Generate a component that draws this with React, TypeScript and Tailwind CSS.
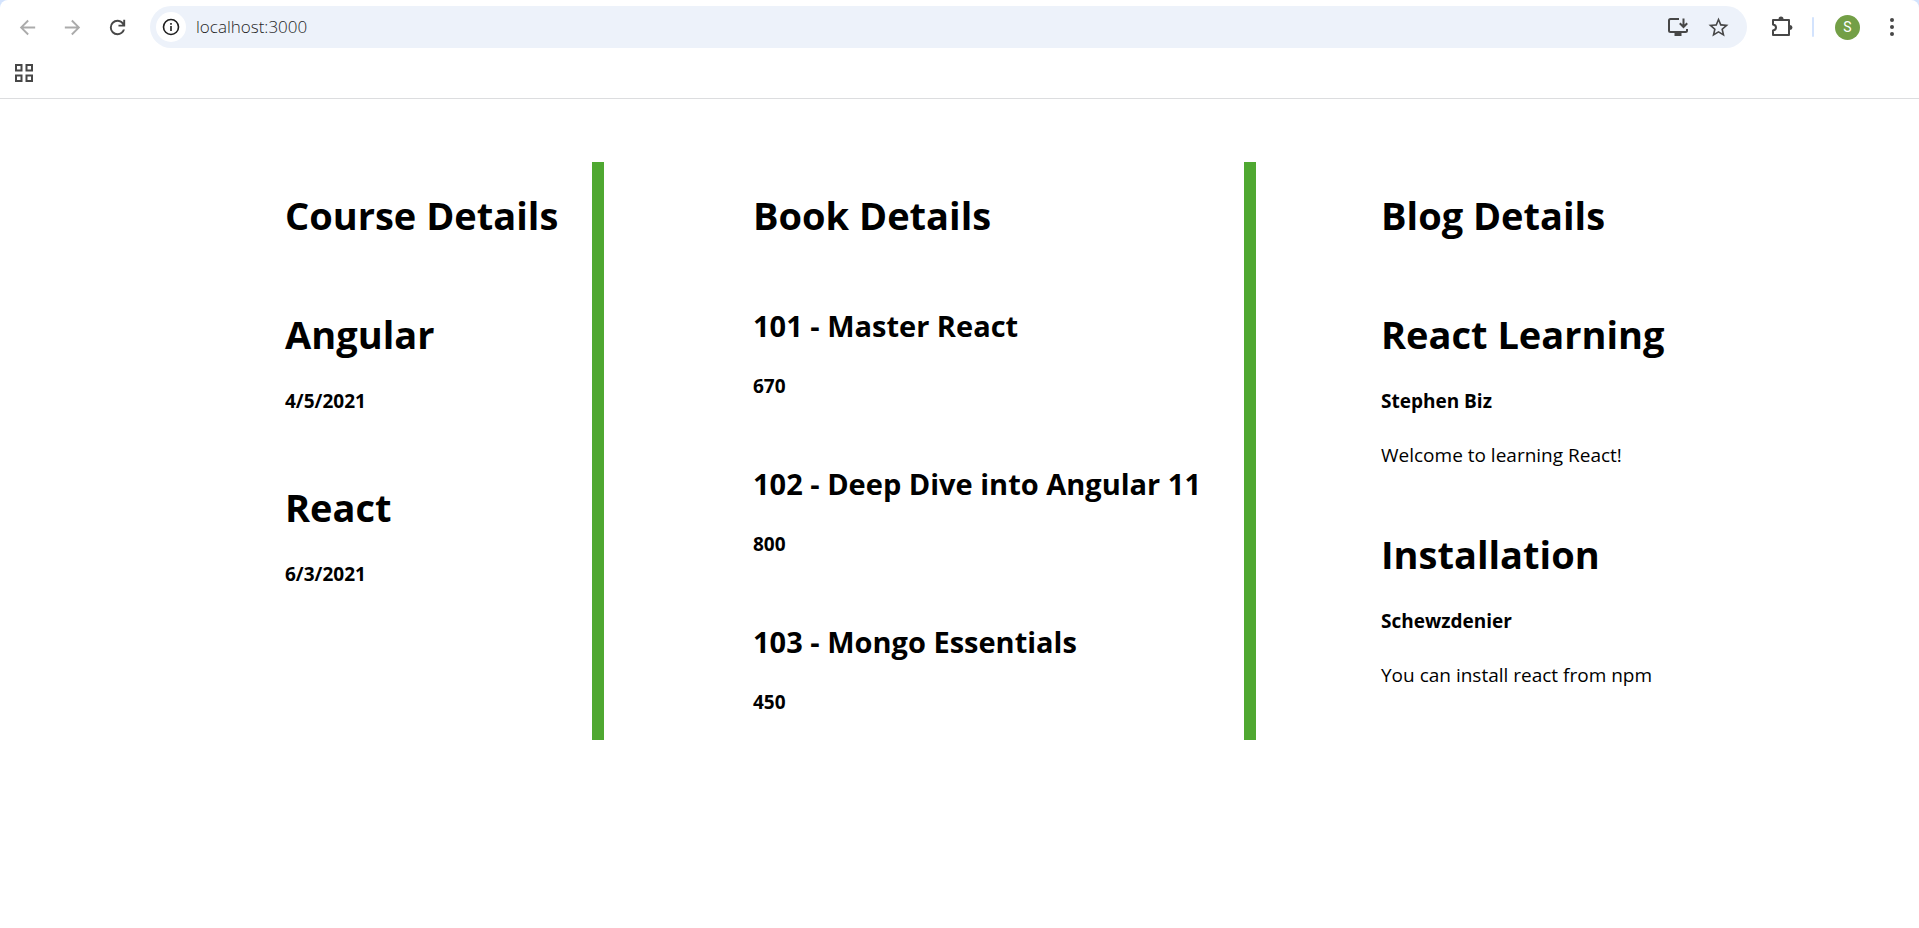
import React from "react";

const courses = [
  { name: "Angular", date: "4/5/2021" },
  { name: "React", date: "6/3/2021" },
];

const books = [
  { id: 101, name: "Master React", price: 670 },
  { id: 102, name: "Deep Dive into Angular 11", price: 800 },
  { id: 103, name: "Mongo Essentials", price: 450 },
];

const blogs = [
  { title: "React Learning", author: "Stephen Biz", text: "Welcome to learning React!" },
  { title: "Installation", author: "Schewzdenier", text: "You can install react from npm" },
];

const titleClass = "text-[38px] leading-[53px] font-bold";
const subtitleClass = "text-[19px] leading-[27px] font-bold";

function IconButton({ label, className, children }: { label: string; className?: string; children: React.ReactNode }) {
  return (
    <button type="button" aria-label={label} className={`flex size-[30px] shrink-0 items-center justify-center ${className ?? ""}`}>
      {children}
    </button>
  );
}

function BrowserBar() {
  return (
    <header className="border-b border-[#dcdddf] text-[#474747]">
      <div className="flex h-[54px] items-center pl-3 pr-3">
        <nav className="flex gap-[15px] text-[#ababab]">
          <IconButton label="Back">
            <svg viewBox="0 0 24 24" className="size-[23px]" fill="currentColor">
              <path d="M20 11H7.8l5.6-5.6L12 4l-8 8 8 8 1.4-1.4L7.8 13H20z" />
            </svg>
          </IconButton>
          <IconButton label="Forward">
            <svg viewBox="0 0 24 24" className="size-[23px]" fill="currentColor">
              <path d="M4 11h12.2l-5.6-5.6L12 4l8 8-8 8-1.4-1.4 5.6-5.6H4z" />
            </svg>
          </IconButton>
          <IconButton label="Reload" className="text-[#474747]">
            <svg viewBox="0 0 24 24" className="size-[23px]" fill="currentColor">
              <path d="M12 20q-3.35 0-5.675-2.325T4 12t2.325-5.675T12 4q1.725 0 3.3.7125T18 6.75V4h2v7h-7V9h4.2q-.8-1.4-2.1875-2.2T12 6Q9.5 6 7.75 7.75T6 12t1.75 4.25T12 18q1.925 0 3.475-1.1T17.65 14h2.1q-.7 2.65-2.85 4.325T12 20" />
            </svg>
          </IconButton>
        </nav>
        <div className="ml-[18px] flex h-[42px] grow items-center rounded-full bg-[#edf2fa] pl-1.5 pr-[14px]">
          <IconButton label="View site information" className="rounded-full bg-white text-[#1f1f1f]">
            <svg viewBox="0 0 18 18" className="size-[18px]" fill="none" stroke="currentColor" strokeWidth="1.6">
              <circle cx="9" cy="9" r="7.5" />
              <path d="M9 8v5M9 5v1.7" />
            </svg>
          </IconButton>
          <input
            aria-label="Address"
            defaultValue="localhost:3000"
            className="ml-2.5 min-w-0 grow bg-transparent text-[17px] leading-6 font-light text-[#1f1f1f] outline-none"
          />
          <div className="flex gap-2.5">
            <IconButton label="Install app">
              <svg viewBox="0 0 22 20" className="h-5 w-[22px]" fill="none" stroke="currentColor" strokeWidth="2">
                <path d="M12 2H3.5Q2 2 2 3.5v10Q2 15 3.5 15h15q1.500 0 1.500-1.500V12" />
                <path d="M7.500 17.500h7" strokeWidth="3" />
                <path d="M16.500 1.500v8M12.800 6.300l3.700 3.700 3.700-3.700" />
              </svg>
            </IconButton>
            <IconButton label="Bookmark this page">
              <svg viewBox="1.500 1.500 21 21" className="size-[21px]" fill="currentColor">
                <path d="M22 9.240l-7.190-.620L12 2 9.190 8.630 2 9.240l5.460 4.730L5.820 21 12 17.270 18.180 21l-1.630-7.030L22 9.240zM12 15.400l-3.760 2.270 1-4.280-3.320-2.880 4.380-.380L12 6.100l1.710 4.040 4.380.380-3.320 2.880 1 4.280L12 15.400z" />
              </svg>
            </IconButton>
          </div>
        </div>
        <div className="ml-5 flex items-center">
          <IconButton label="Extensions">
            <svg viewBox="0 0 22 22" className="size-[22px]" fill="none" stroke="currentColor" strokeWidth="2" strokeLinejoin="round">
              <path d="M2 4h16v15H2v-4.500q3-.500 3-3T2 8.500z" />
              <path d="M7.500 3a2.500 2.500 0 0 1 5 0zM19 9a2.500 2.500 0 0 1 0 5z" fill="currentColor" stroke="none" />
            </svg>
          </IconButton>
          <span className="ml-[15px] h-5 w-0.5 rounded-full bg-[#d3e3fd]" />
          <button
            type="button"
            aria-label="Profile"
            className="ml-[21px] flex size-[25px] items-center justify-center rounded-full bg-[#739f46] font-[Roboto,sans-serif] text-[14px] text-white"
          >
            S
          </button>
          <IconButton label="Menu" className="ml-[17px]">
            <svg viewBox="0 0 20 20" className="size-5" fill="currentColor">
              <circle cx="10" cy="3" r="2" />
              <circle cx="10" cy="10" r="2" />
              <circle cx="10" cy="17" r="2" />
            </svg>
          </IconButton>
        </div>
      </div>
      <div className="flex h-11 items-center px-[9px] pb-1.5">
        <IconButton label="Bookmark apps">
          <svg viewBox="0 0 18 18" className="size-[18px]" fill="none" stroke="currentColor" strokeWidth="2">
            <path d="M1 1h5.500v5.500H1zM11.500 1H17v5.500h-5.500zM1 11.500h5.500V17H1zM11.500 11.500H17V17h-5.500z" />
          </svg>
        </IconButton>
      </div>
    </header>
  );
}

export default function App() {
  return (
    <div className="bg-[#d3e3fd] font-['Open_Sans','Noto_Sans',sans-serif]">
      <div className="min-h-screen rounded-t-lg bg-white text-black">
        <BrowserBar />
        <main className="grid grid-cols-[604fr_652fr_663fr] pt-[63px] whitespace-nowrap">
          <section className="border-r-12 border-[#4fa831] pt-[27px] pb-6 pl-[285px]">
            <h1 className={titleClass}>Course Details</h1>
            {courses.map((course) => (
              <article key={course.name} className="mt-[66px] flex flex-col gap-[27px]">
                <h1 className={titleClass}>{course.name}</h1>
                <h4 className={subtitleClass}>{course.date}</h4>
              </article>
            ))}
          </section>
          <section className="border-r-12 border-[#4fa831] pt-[27px] pb-6 pl-[149px]">
            <h1 className={titleClass}>Book Details</h1>
            {books.map((book) => (
              <article key={book.id} className="mt-16 flex flex-col gap-[27px]">
                <h2 className="text-[29px] leading-10 font-bold">
                  {book.id} - {book.name}
                </h2>
                <h4 className={subtitleClass}>{book.price}</h4>
              </article>
            ))}
          </section>
          <section className="pt-[27px] pb-6 pl-[125px]">
            <h1 className={titleClass}>Blog Details</h1>
            <div className="mt-[66px] flex flex-col gap-[59px]">
              {blogs.map((blog) => (
                <article key={blog.title} className="flex flex-col gap-[27px]">
                  <h1 className={titleClass}>{blog.title}</h1>
                  <h4 className={subtitleClass}>{blog.author}</h4>
                  <p className="text-[19px] leading-[27px]">{blog.text}</p>
                </article>
              ))}
            </div>
          </section>
        </main>
      </div>
    </div>
  );
}
